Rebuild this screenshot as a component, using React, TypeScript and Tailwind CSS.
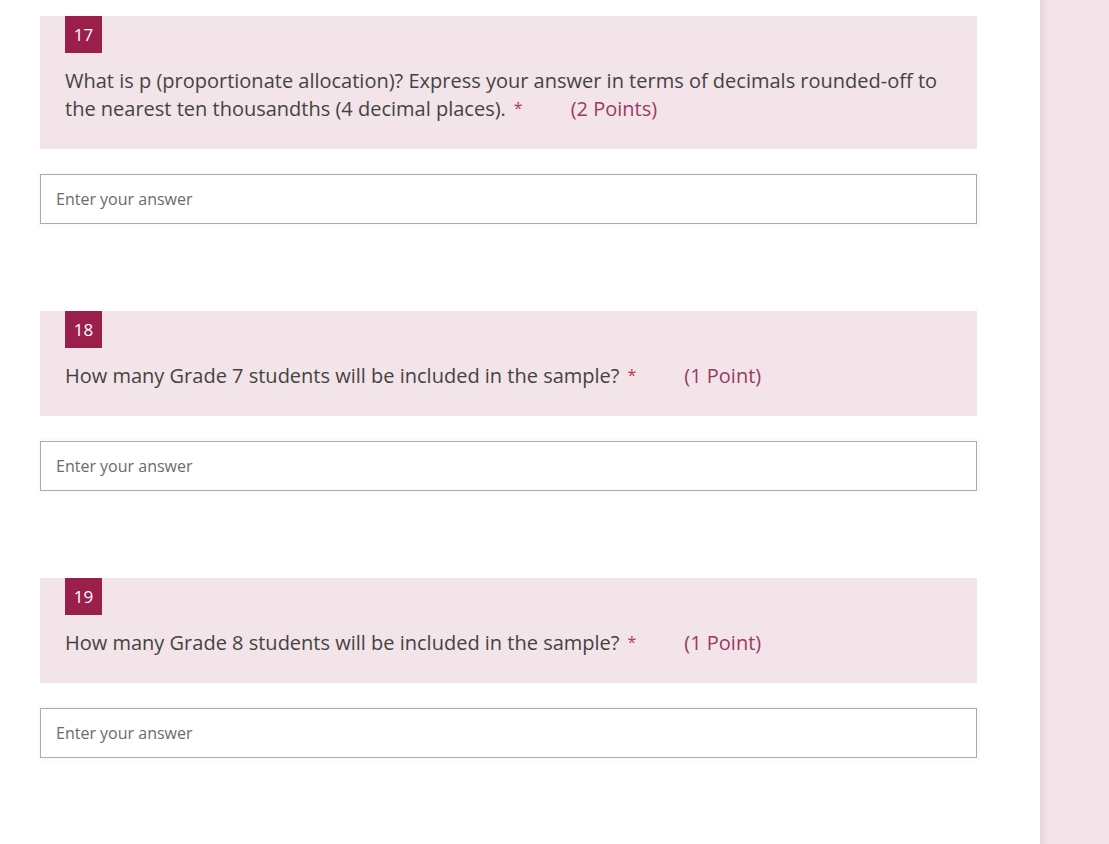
const FONT = "font-['Segoe_UI','Open_Sans','Noto_Sans',sans-serif]";

interface Question {
  num: number;
  text: string;
  points: string;
}

const QUESTIONS: Question[] = [
  {
    num: 17,
    text: 'What is p (proportionate allocation)? Express your answer in terms of decimals rounded-off to the nearest ten thousandths (4 decimal places).',
    points: '(2 Points)',
  },
  { num: 18, text: 'How many Grade 7 students will be included in the sample?', points: '(1 Point)' },
  { num: 19, text: 'How many Grade 8 students will be included in the sample?', points: '(1 Point)' },
];

function QuestionBlock({ q }: { q: Question }) {
  return (
    <div className="w-[937px]">
      <div className="bg-[#f2e4e9] pl-[25px] pr-[25px] pb-[26px]">
        <div className="w-[37px] h-[37px] bg-[#9b1f4b] text-white text-[17px] flex items-center justify-center">
          {q.num}
        </div>
        <div className="mt-[14px] text-[20px] leading-[28px] text-[#454341]">
          {q.text}
          <span className="text-[#b83a48] text-[16px] leading-none ml-[8px] relative top-[-2px]">*</span>
          <span className="text-[#9a3a63] ml-[48px]">{q.points}</span>
        </div>
      </div>
      <div className="mt-[25px] h-[50px] border border-[#ababab] bg-white flex items-center pl-[15px] shadow-[0_0_0_3px_rgba(0,0,0,0.015)]">
        <span className="text-[16px] text-[#6b6b6b]">Enter your answer</span>
      </div>
    </div>
  );
}

export default function App() {
  return (
    <div className={`${FONT} flex h-[844px] overflow-hidden bg-white`}>
      <main className="w-[1040px] shrink-0 pl-10 pt-4 flex flex-col gap-[87px]">
        {QUESTIONS.map((q) => (
          <QuestionBlock key={q.num} q={q} />
        ))}
      </main>
      <aside className="flex-1 bg-[#f2e4e9] shadow-[inset_7px_0_6px_-5px_rgba(120,40,70,0.12)]" />
    </div>
  );
}
